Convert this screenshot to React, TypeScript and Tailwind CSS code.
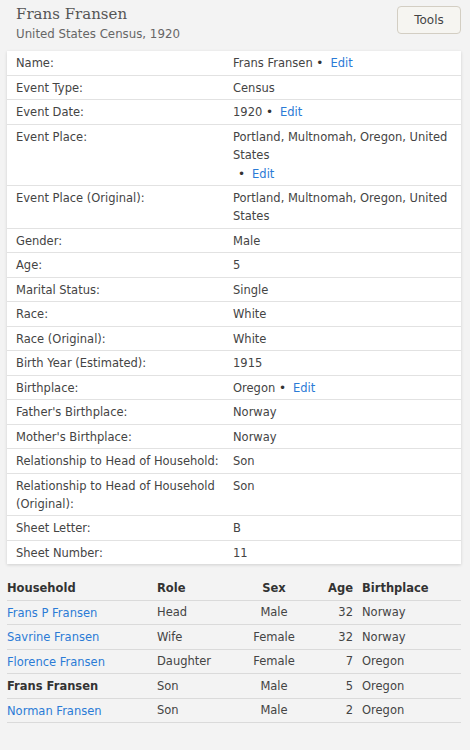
import React from 'react';

type Fact = { label: string; value: string; edit?: boolean; editBreak?: boolean };

const facts: Fact[] = [
  { label: 'Name:', value: 'Frans Fransen', edit: true },
  { label: 'Event Type:', value: 'Census' },
  { label: 'Event Date:', value: '1920', edit: true },
  { label: 'Event Place:', value: 'Portland, Multnomah, Oregon, United States', edit: true, editBreak: true },
  { label: 'Event Place (Original):', value: 'Portland, Multnomah, Oregon, United States' },
  { label: 'Gender:', value: 'Male' },
  { label: 'Age:', value: '5' },
  { label: 'Marital Status:', value: 'Single' },
  { label: 'Race:', value: 'White' },
  { label: 'Race (Original):', value: 'White' },
  { label: 'Birth Year (Estimated):', value: '1915' },
  { label: 'Birthplace:', value: 'Oregon', edit: true },
  { label: "Father's Birthplace:", value: 'Norway' },
  { label: "Mother's Birthplace:", value: 'Norway' },
  { label: 'Relationship to Head of Household:', value: 'Son' },
  { label: 'Relationship to Head of Household (Original):', value: 'Son' },
  { label: 'Sheet Letter:', value: 'B' },
  { label: 'Sheet Number:', value: '11' },
];

const household = [
  { name: 'Frans P Fransen', role: 'Head', sex: 'Male', age: '32', place: 'Norway' },
  { name: 'Savrine Fransen', role: 'Wife', sex: 'Female', age: '32', place: 'Norway' },
  { name: 'Florence Fransen', role: 'Daughter', sex: 'Female', age: '7', place: 'Oregon' },
  { name: 'Frans Fransen', role: 'Son', sex: 'Male', age: '5', place: 'Oregon', self: true },
  { name: 'Norman Fransen', role: 'Son', sex: 'Male', age: '2', place: 'Oregon' },
];

function EditLink() {
  return (
    <>
      <span className="text-[12px] text-[#333]">•</span>
      <a className="ml-[7px] text-[#2b7bd6]">Edit</a>
    </>
  );
}

export default function App() {
  return (
    <div className="min-h-[750px] w-[470px] bg-[#f3f3f3] text-[11.5px] leading-[18px] text-[#444] font-['DejaVu_Sans',Verdana,sans-serif]">
      {/* Header */}
      <div className="flex items-start justify-between pl-4 pr-[9px] pt-[2px]">
        <div>
          <h1 className="font-['DejaVu_Serif',serif] text-[15px] leading-[24px] text-[#555]">Frans Fransen</h1>
          <p className="text-[11.8px] leading-[16px] text-[#666]">United States Census, 1920</p>
        </div>
        <button className="mt-[4px] h-[28px] w-[64px] rounded border border-[#d3cec3] bg-[#f6f5f1] text-[12px] text-[#444]">
          Tools
        </button>
      </div>

      {/* Facts card */}
      <div className="ml-[7px] mt-[9px] w-[454px] bg-white shadow-[0_1px_3px_rgba(0,0,0,0.15)]">
        {facts.map((f, i) => (
          <div
            key={f.label}
            className={`flex px-[9px] pt-[3px] pb-[2.5px] ${i < facts.length - 1 ? 'border-b border-[#e2e2e2]' : ''}`}
          >
            <div className="w-[217px] shrink-0 pr-2">{f.label}</div>
            <div className="flex-1">
              {f.value}
              {f.edit && !f.editBreak && (
                <>
                  {' '}
                  <EditLink />
                </>
              )}
              {f.editBreak && (
                <div className="pl-[5px] pt-[1px]">
                  <EditLink />
                </div>
              )}
            </div>
          </div>
        ))}
      </div>

      {/* Household table */}
      <table className="ml-[7px] mt-[12px] w-[454px] border-collapse">
        <thead>
          <tr className="border-b border-[#dadada] text-[#333]">
            <th className="w-[150px] pt-[3px] pb-[2.5px] text-left font-bold">Household</th>
            <th className="w-[82px] text-left font-bold">Role</th>
            <th className="w-[70px] text-center font-bold">Sex</th>
            <th className="w-[44px] text-right font-bold">Age</th>
            <th className="pl-[9px] text-left font-bold">Birthplace</th>
          </tr>
        </thead>
        <tbody>
          {household.map((h) => (
            <tr key={h.name} className="border-b border-[#dadada]">
              <td className={`pt-[3px] pb-[2.5px] ${h.self ? 'font-bold text-[#333]' : 'text-[#2b7bd6]'}`}>{h.name}</td>
              <td>{h.role}</td>
              <td className="text-center">{h.sex}</td>
              <td className="text-right">{h.age}</td>
              <td className="pl-[9px]">{h.place}</td>
            </tr>
          ))}
        </tbody>
      </table>
    </div>
  );
}
